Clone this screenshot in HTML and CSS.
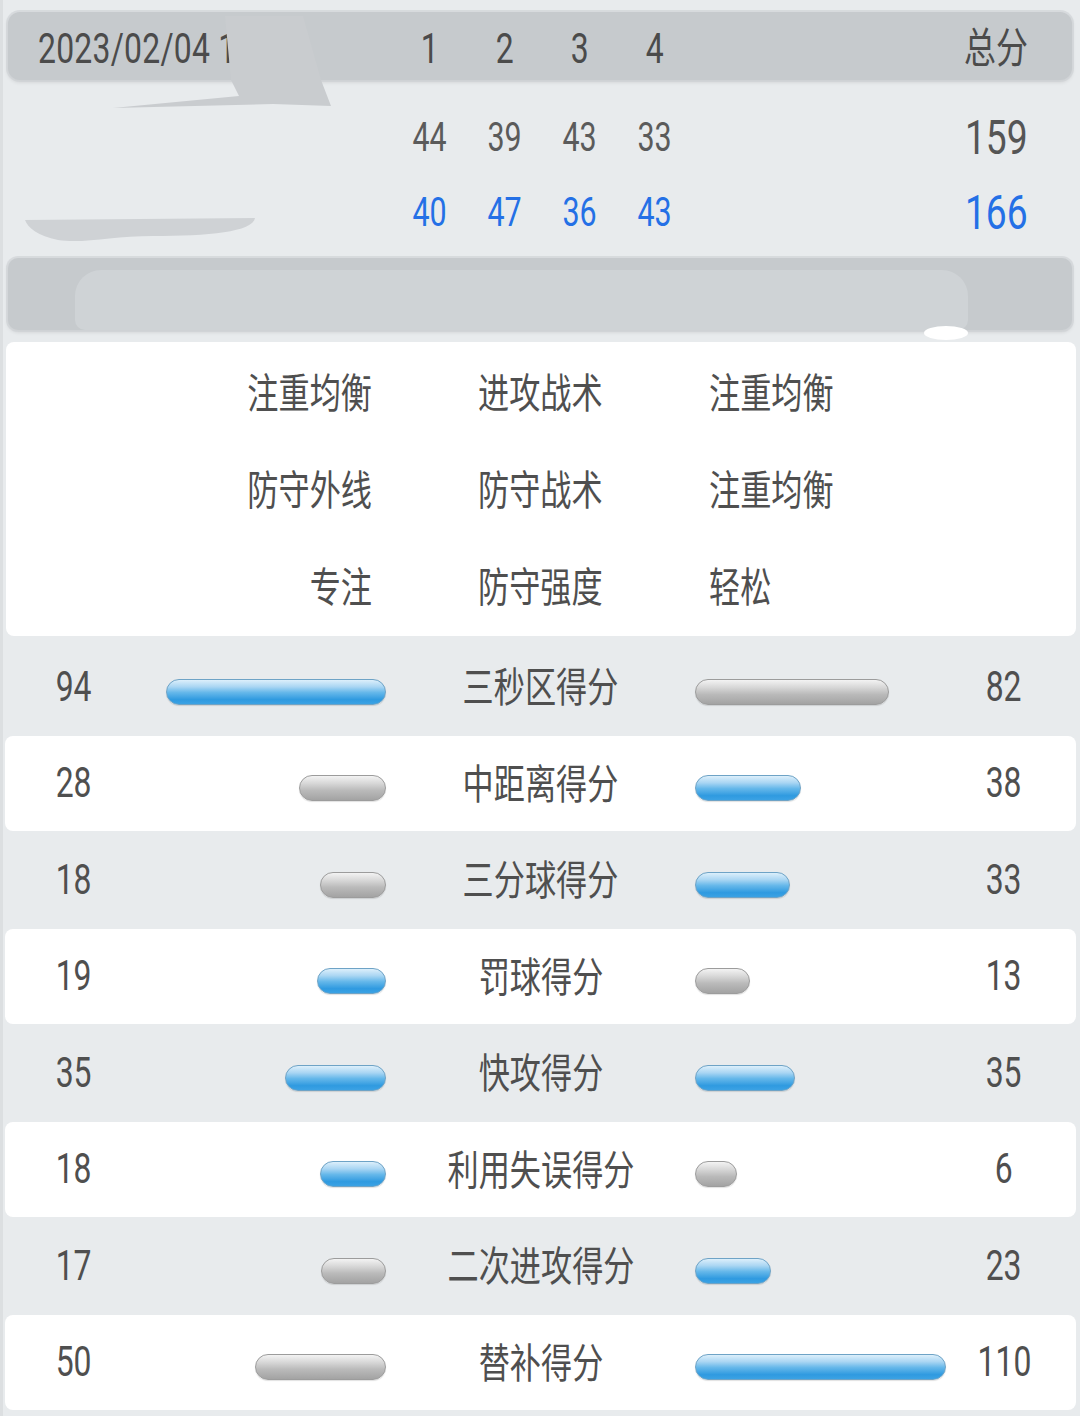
FILE: index.html
```html
<!DOCTYPE html>
<html lang="zh-CN">
<head>
<meta charset="utf-8">
<title>比赛统计</title>
<link rel="stylesheet" href="styles.css">
</head>
<body>
<div class="page">
  <header class="head-bar">
    <div class="date"><span class="sq sq-l">2023/02/04 1</span></div>
    <div class="q"><span class="sq">1</span></div>
    <div class="q"><span class="sq">2</span></div>
    <div class="q"><span class="sq">3</span></div>
    <div class="q"><span class="sq">4</span></div>
    <div></div>
    <div class="q"><span class="sq">总分</span></div>
    <div></div>
  </header>

  <section class="scores">
    <div class="score-row">
      <div class="team"></div>
      <div class="q"><span class="sq">44</span></div>
      <div class="q"><span class="sq">39</span></div>
      <div class="q"><span class="sq">43</span></div>
      <div class="q"><span class="sq">33</span></div>
      <div></div>
      <div class="q tot"><span class="sq">159</span></div>
      <div></div>
    </div>
    <div class="score-row blue">
      <div class="team"></div>
      <div class="q"><span class="sq">40</span></div>
      <div class="q"><span class="sq">47</span></div>
      <div class="q"><span class="sq">36</span></div>
      <div class="q"><span class="sq">43</span></div>
      <div></div>
      <div class="q tot"><span class="sq">166</span></div>
      <div></div>
    </div>
  </section>

  <div class="info-bar"><div class="info-blur"></div></div>

  <section class="tactics">
    <div class="t1"><span class="sq sq-r">注重均衡</span></div>
    <div class="t2"><span class="sq sq-l">进攻战术</span></div>
    <div class="t2"><span class="sq sq-l">注重均衡</span></div>
    <div class="t1"><span class="sq sq-r">防守外线</span></div>
    <div class="t2"><span class="sq sq-l">防守战术</span></div>
    <div class="t2"><span class="sq sq-l">注重均衡</span></div>
    <div class="t1"><span class="sq sq-r">专注</span></div>
    <div class="t2"><span class="sq sq-l">防守强度</span></div>
    <div class="t2"><span class="sq sq-l">轻松</span></div>
  </section>

  <section class="stats">
    <div class="stat">
      <div class="num"><span class="sq">94</span></div>
      <div class="lb"><div class="bar blue-bar" style="width:220px"></div></div>
      <div class="label"><span class="sq">三秒区得分</span></div>
      <div class="rb"><div class="bar grey-bar" style="width:194px"></div></div>
      <div class="num"><span class="sq">82</span></div>
    </div>
    <div class="stat white">
      <div class="num"><span class="sq">28</span></div>
      <div class="lb"><div class="bar grey-bar" style="width:87px"></div></div>
      <div class="label"><span class="sq">中距离得分</span></div>
      <div class="rb"><div class="bar blue-bar" style="width:106px"></div></div>
      <div class="num"><span class="sq">38</span></div>
    </div>
    <div class="stat">
      <div class="num"><span class="sq">18</span></div>
      <div class="lb"><div class="bar grey-bar" style="width:66px"></div></div>
      <div class="label"><span class="sq">三分球得分</span></div>
      <div class="rb"><div class="bar blue-bar" style="width:95px"></div></div>
      <div class="num"><span class="sq">33</span></div>
    </div>
    <div class="stat white">
      <div class="num"><span class="sq">19</span></div>
      <div class="lb"><div class="bar blue-bar" style="width:69px"></div></div>
      <div class="label"><span class="sq">罚球得分</span></div>
      <div class="rb"><div class="bar grey-bar" style="width:55px"></div></div>
      <div class="num"><span class="sq">13</span></div>
    </div>
    <div class="stat">
      <div class="num"><span class="sq">35</span></div>
      <div class="lb"><div class="bar blue-bar" style="width:101px"></div></div>
      <div class="label"><span class="sq">快攻得分</span></div>
      <div class="rb"><div class="bar blue-bar" style="width:100px"></div></div>
      <div class="num"><span class="sq">35</span></div>
    </div>
    <div class="stat white">
      <div class="num"><span class="sq">18</span></div>
      <div class="lb"><div class="bar blue-bar" style="width:66px"></div></div>
      <div class="label"><span class="sq">利用失误得分</span></div>
      <div class="rb"><div class="bar grey-bar" style="width:42px"></div></div>
      <div class="num"><span class="sq">6</span></div>
    </div>
    <div class="stat">
      <div class="num"><span class="sq">17</span></div>
      <div class="lb"><div class="bar grey-bar" style="width:65px"></div></div>
      <div class="label"><span class="sq">二次进攻得分</span></div>
      <div class="rb"><div class="bar blue-bar" style="width:76px"></div></div>
      <div class="num"><span class="sq">23</span></div>
    </div>
    <div class="stat white">
      <div class="num"><span class="sq">50</span></div>
      <div class="lb"><div class="bar grey-bar" style="width:131px"></div></div>
      <div class="label"><span class="sq">替补得分</span></div>
      <div class="rb"><div class="bar blue-bar" style="width:251px"></div></div>
      <div class="num"><span class="sq">110</span></div>
    </div>
  </section>

  <svg class="mask" width="1080" height="360" viewBox="0 0 1080 360" aria-hidden="true">
    <polygon points="222,16 300,16 318,80 328,106 270,104 110,108 236,96 228,80" fill="#c9cccf"/>
    <path d="M22,220 L252,218 C250,232 205,236 150,236 C110,236 80,244 55,240 C35,236 25,228 22,220 Z" fill="#cfd2d5"/>
    <ellipse cx="943" cy="333" rx="22" ry="7" fill="#ffffff"/>
  </svg>
</div>
</body>
</html>
```

FILE: styles.css
```css
* { box-sizing: border-box; }

html, body {
  margin: 0;
  padding: 0;
  background: #e8ebed;
}

.page {
  position: relative;
  width: 1080px;
  height: 1416px;
  overflow: hidden;
  background: #e8ebed;
  font-family: Roboto, "Noto Sans CJK SC", sans-serif;
  color: #505050;
  border-left: 3px solid #dcdfe1;
}

.sq {
  display: inline-block;
  white-space: nowrap;
  transform: scaleX(0.76);
  transform-origin: center center;
}
.sq-l { transform-origin: left center; }
.sq-r { transform-origin: right center; }

/* header bar */
.head-bar {
  margin: 12px 8px 0 5px;
  height: 68px;
  border-radius: 12px;
  background: #c6cacd;
  box-shadow: 0 0 0 2px rgba(205, 209, 212, 0.6), 0 2px 4px rgba(0, 0, 0, 0.12);
  display: grid;
  grid-template-columns: 384px repeat(4, 75px) 1fr 100px 26px;
  align-items: center;
  padding-top: 6px;
  font-size: 42px;
  line-height: 1;
  color: #4b4b4b;
}
.date {
  padding-left: 30px;
  white-space: nowrap;
  letter-spacing: 0.3px;
}
.q { text-align: center; white-space: nowrap; }

/* scores */
.scores {
  padding-top: 20px;
}
.score-row {
  display: grid;
  grid-template-columns: 389px repeat(4, 75px) 1fr 100px 34px;
  align-items: center;
  height: 75px;
  font-size: 40px;
  line-height: 1;
  color: #5b5b5b;
}
.score-row .tot { font-size: 49px; color: #555555; }
.score-row.blue, .score-row.blue .tot { color: #2470e6; }

/* second bar */
.info-bar {
  position: relative;
  margin: 8px 8px 0 5px;
  height: 72px;
  border-radius: 10px;
  background: #c6cacd;
  box-shadow: 0 0 0 2px rgba(205, 209, 212, 0.6), 0 2px 4px rgba(0, 0, 0, 0.12);
}
.info-blur {
  position: absolute;
  left: 67px;
  right: 104px;
  top: 12px;
  bottom: 0;
  background: #cfd3d6;
  border-radius: 26px 26px 10px 10px;
}

/* tactics */
.tactics {
  margin: 12px 4px 0 3px;
  height: 294px;
  background: #ffffff;
  border-radius: 8px;
  display: grid;
  grid-template-columns: 366px 125px 1fr;
  grid-auto-rows: 97px;
  column-gap: 106px;
  align-items: center;
  font-family: "Noto Sans CJK SC", sans-serif;
  font-size: 41px;
  line-height: 1;
  color: #4f4f4f;
  padding-bottom: 3px;
}
.t1 { text-align: right; white-space: nowrap; }
.t2 { text-align: left; white-space: nowrap; }

/* stats */
.stats {
  padding-top: 2px;
}
.stat {
  display: grid;
  grid-template-columns: 138px 243px 309px 255px 108px 1fr;
  align-items: center;
  height: 95.5px;
  margin: 1px 4px 1px 2px;
  border-radius: 8px;
  font-size: 42px;
  line-height: 1;
  color: #4f4f4f;
}
.stat.white { background: #ffffff; }
.num { text-align: center; }
.label {
  text-align: center;
  white-space: nowrap;
  font-family: "Noto Sans CJK SC", sans-serif;
  font-size: 41px;
  padding-bottom: 4px;
}
.lb { display: flex; justify-content: flex-end; }
.rb { display: flex; justify-content: flex-start; }

.bar {
  height: 26px;
  margin-top: 10px;
  border-radius: 13px;
  box-shadow: 0 1px 1px rgba(0, 0, 0, 0.12);
}
.blue-bar {
  background: linear-gradient(to bottom, #dcefFb 0%, #aad6f3 28%, #66b8ea 52%, #2f9ae0 82%, #3ba2e4 100%);
  border: 1px solid #6ea3c6;
}
.grey-bar {
  background: linear-gradient(to bottom, #f3f3f3 0%, #d8d8d8 30%, #bababa 60%, #a3a3a3 100%);
  border: 1px solid #9c9c9c;
}

.mask {
  position: absolute;
  left: 0;
  top: 0;
  pointer-events: none;
}
```
